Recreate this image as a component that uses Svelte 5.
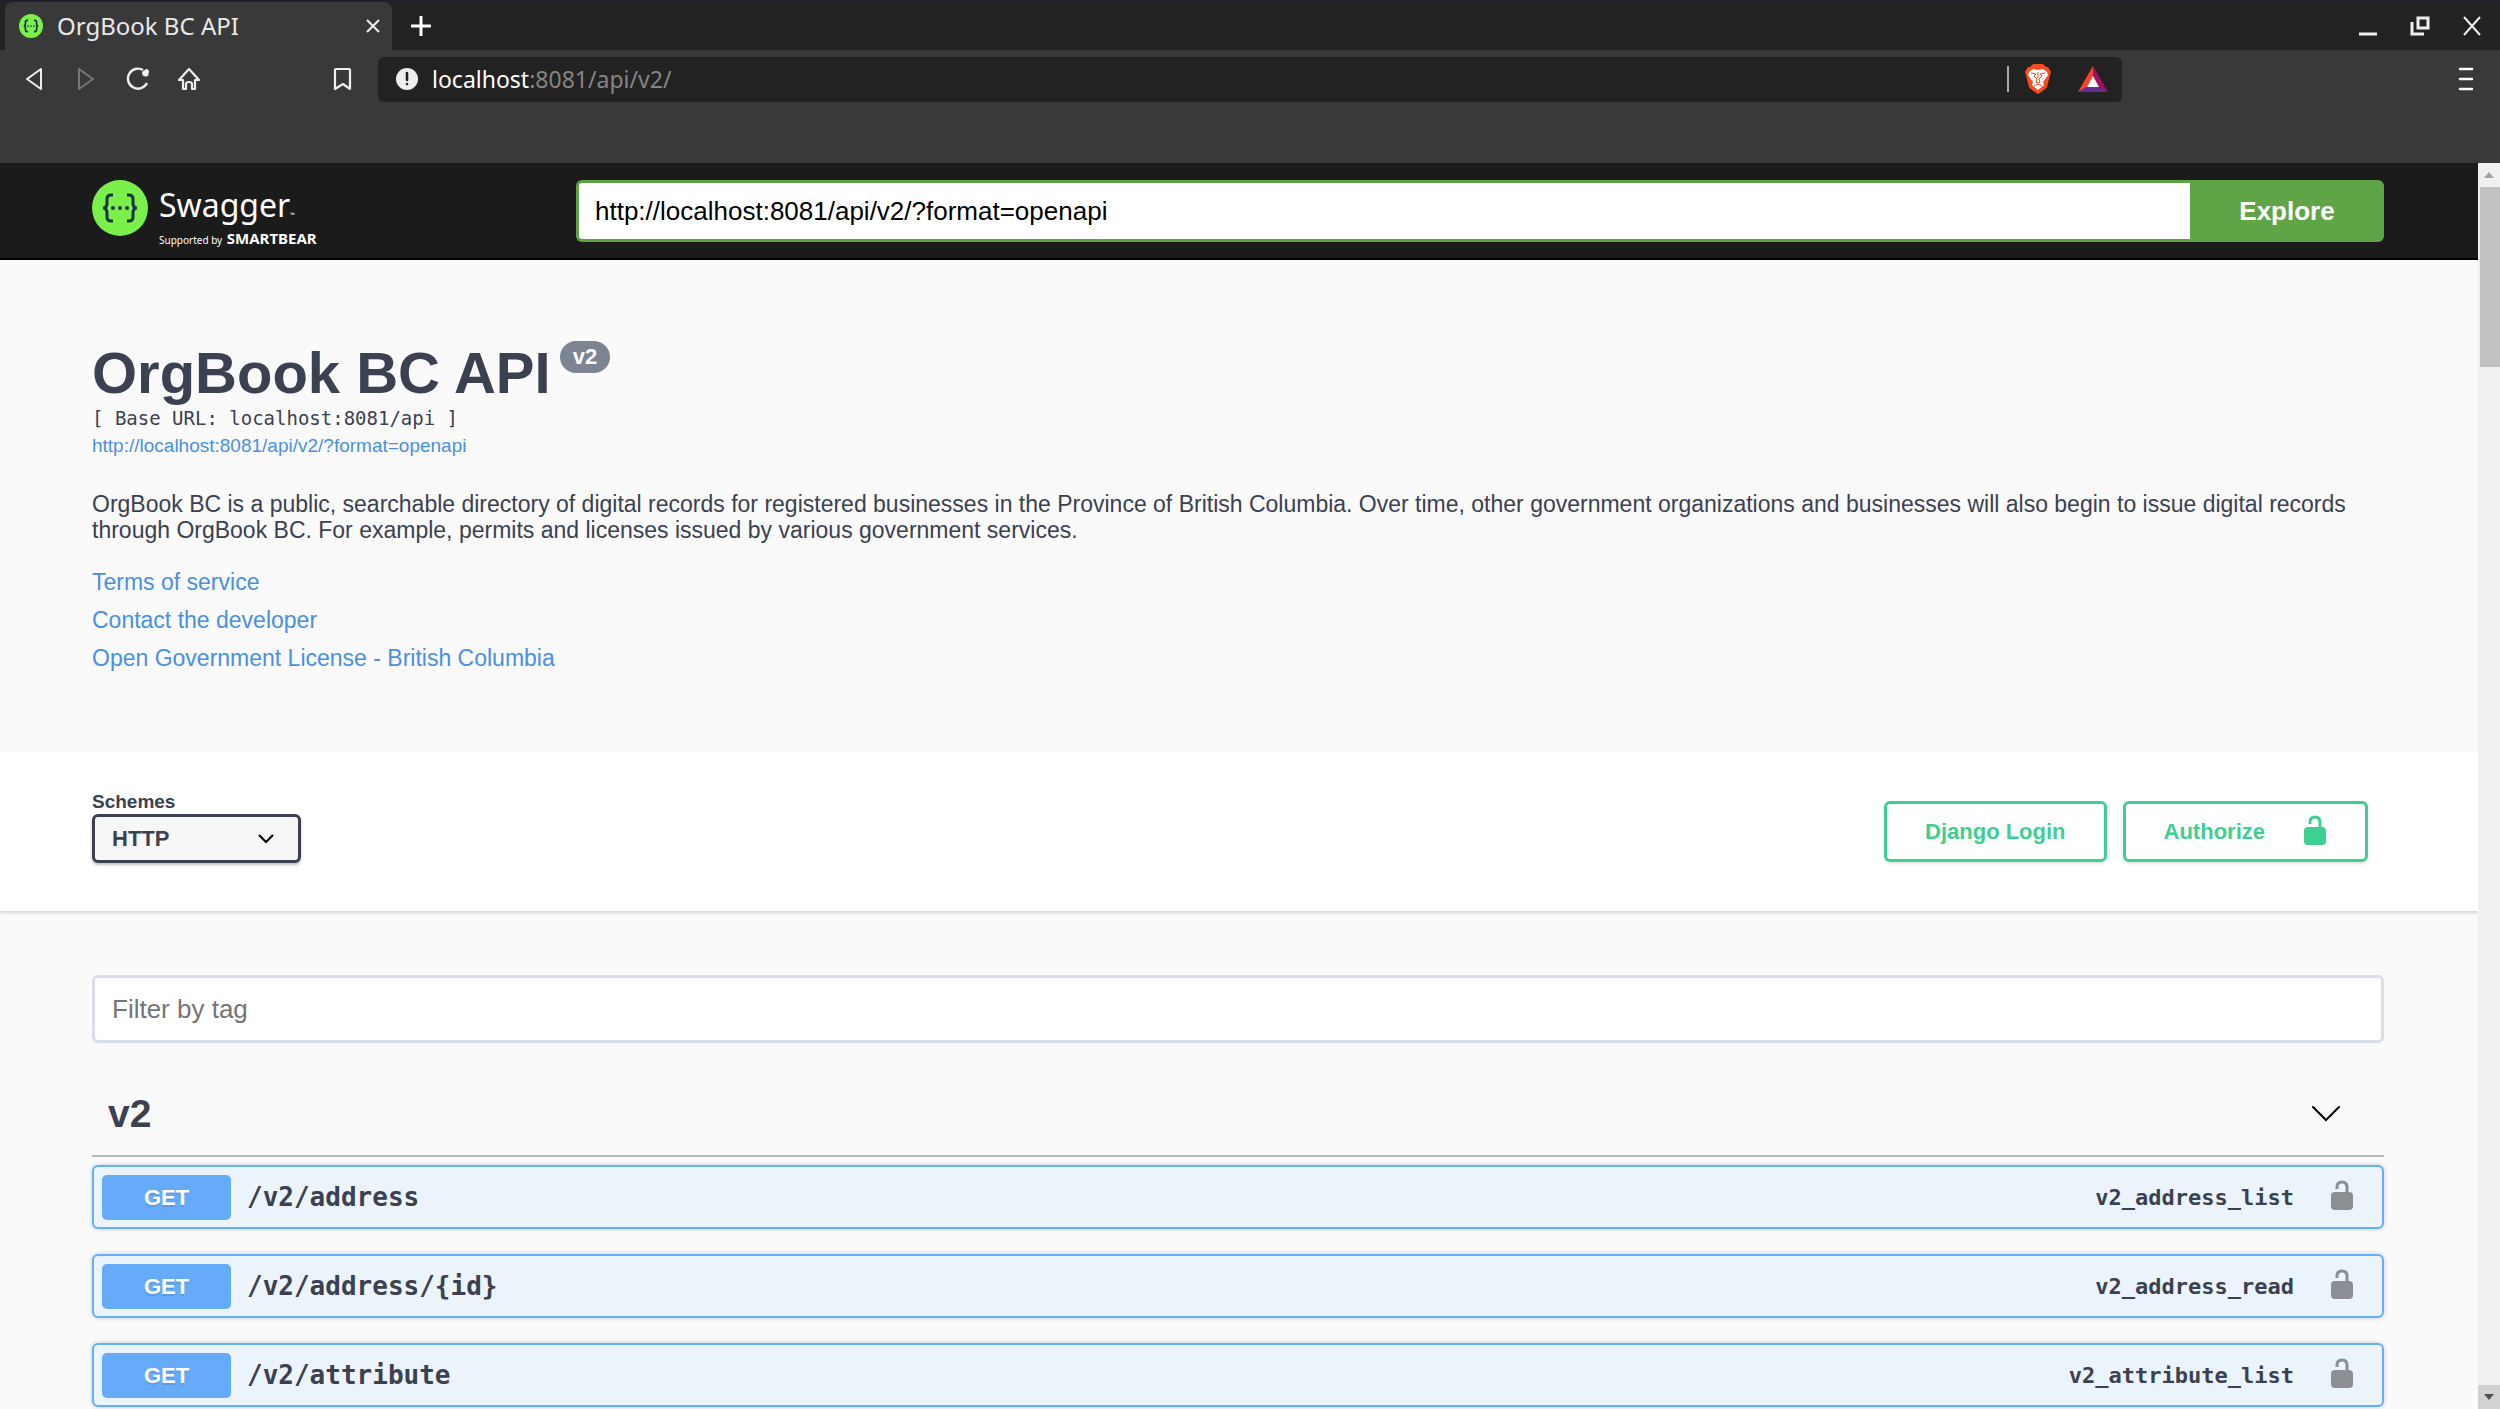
<script lang="ts">
    let url = "http://localhost:8081/api/v2/?format=openapi";
    let scheme = "HTTP";
    let filter = "";

    const links = [
        "Terms of service",
        "Contact the developer",
        "Open Government License - British Columbia",
    ];

    const operations = [
        { method: "GET", path: "/v2/address", id: "v2_address_list" },
        { method: "GET", path: "/v2/address/{id}", id: "v2_address_read" },
        { method: "GET", path: "/v2/attribute", id: "v2_attribute_list" },
    ];
</script>

<div class="browser">
    <header class="chrome">
        <div class="tabs">
            <div class="tab">
                <svg class="favicon" viewBox="0 0 56 56" aria-hidden="true">
                    <circle cx="28" cy="28" r="28" fill="#7cf04a" />
                    <g fill="none" stroke="#173647" stroke-width="4">
                        <path d="M21 15h-2q-4 0-4 4v4q0 5-4 5q4 0 4 5v4q0 4 4 4h2" />
                        <path d="M35 15h2q4 0 4 4v4q0 5 4 5q-4 0-4 5v4q0 4-4 4h-2" />
                    </g>
                    <g fill="#173647">
                        <circle cx="21" cy="28" r="2" />
                        <circle cx="28" cy="28" r="2" />
                        <circle cx="35" cy="28" r="2" />
                    </g>
                </svg>
                <span class="tab-title">OrgBook BC API</span>
                <button class="tab-close" aria-label="Close tab">
                    <svg width="14" height="14" viewBox="0 0 14 14">
                        <path d="M1 1l12 12M13 1L1 13" stroke="#eee" stroke-width="2" />
                    </svg>
                </button>
            </div>
            <button class="new-tab" aria-label="New tab">
                <svg width="20" height="20" viewBox="0 0 20 20">
                    <path d="M10 1v18M1 10h18" stroke="#fff" stroke-width="3" stroke-linecap="round" />
                </svg>
            </button>
            <div class="window-buttons">
                <button aria-label="Minimize">
                    <svg width="20" height="20" viewBox="0 0 20 20">
                        <path d="M1 18h18" stroke="#eee" stroke-width="3" />
                    </svg>
                </button>
                <button aria-label="Restore">
                    <svg width="20" height="20" viewBox="0 0 20 20" fill="none" stroke="#eee" stroke-width="3">
                        <path d="M8 2h10v10H8z" />
                        <path d="M2 6v12h12" />
                    </svg>
                </button>
                <button aria-label="Close">
                    <svg width="20" height="20" viewBox="0 0 20 20">
                        <path d="M2 1l16 18M18 1L2 19" stroke="#eee" stroke-width="2" />
                    </svg>
                </button>
            </div>
        </div>

        <div class="toolbar">
            <div class="nav">
                <button aria-label="Back">
                    <svg width="24" height="24" viewBox="0 0 24 24">
                        <path d="M19 2v20L5 12z" fill="none" stroke="#eee" stroke-width="2" stroke-linejoin="round" />
                    </svg>
                </button>
                <button aria-label="Forward" disabled>
                    <svg width="24" height="24" viewBox="0 0 24 24">
                        <path d="M5 2v20l14-10z" fill="none" stroke="#777" stroke-width="2" stroke-linejoin="round" />
                    </svg>
                </button>
                <button aria-label="Reload">
                    <svg width="24" height="24" viewBox="0 0 24 24">
                        <path d="M21 16A10 10 0 1 1 17 3" fill="none" stroke="#eee" stroke-width="2.4" />
                        <path d="M16 5l4-3q3 0 3 3l-1 4q-6 2-6-4z" fill="#eee" />
                    </svg>
                </button>
                <button aria-label="Home">
                    <svg width="24" height="24" viewBox="0 0 24 24">
                        <path d="M1 13L11 2l10 11h-4v9h-3v-5q0-2-3-2t-3 2v5H5v-9z" fill="none" stroke="#eee" stroke-width="2.2" stroke-linejoin="round" />
                    </svg>
                </button>
            </div>
            <button aria-label="Bookmark">
                <svg width="24" height="24" viewBox="0 0 24 24">
                    <path d="M4 3q0-1 1-1h13q1 0 1 1v19l-7-5l-8 5z" fill="none" stroke="#eee" stroke-width="2.2" stroke-linejoin="round" />
                </svg>
            </button>
            <div class="address">
                <svg width="22" height="22" viewBox="0 0 22 22" aria-hidden="true">
                    <circle cx="11" cy="11" r="11" fill="#eee" />
                    <path d="M11 5v7M11 16v0" stroke="#222" stroke-width="2.6" stroke-linecap="round" />
                </svg>
                <span class="location"><b>localhost</b>:8081/api/v2/</span>
                <span class="divider"></span>
                <button aria-label="Brave Shields">
                    <svg width="26" height="30" viewBox="0 0 26 30">
                        <path d="M8 0h10l3 3h2l3 5-1 3-3 12q-1 2-9 7q-8-5-9-7L1 11 0 8l3-5h2z" fill="#fb4a1e" />
                        <path d="M4 8l4-3 5 1 5-1 4 3 1 3-5 7 1 3-6 5-6-5 1-3-5-7z" fill="#fff" />
                        <path d="M6 9l5 1-2 2 3 3-1 3 2 1 2-1-1-3 3-3-2-2 5-1M13 8v6M9 22l4-2 4 2" fill="none" stroke="#fb4a1e" stroke-width="1" />
                    </svg>
                </button>
                <button class="rewards" aria-label="Brave Rewards">
                    <svg width="30" height="26" viewBox="0 0 30 26">
                        <path d="M15 0L0 26l9-5 6-11z" fill="#ff4130" />
                        <path d="M15 0l15 26-9-5-6-11z" fill="#9e1060" />
                        <path d="M0 26h30l-9-5H9z" fill="#662d91" />
                        <path d="M15 10l6 11H9z" fill="#fff" />
                    </svg>
                </button>
            </div>
            <button class="menu" aria-label="Menu">
                <svg width="16" height="24" viewBox="0 0 16 24">
                    <path d="M2 2h12M2 12h12M2 22h12" stroke="#fff" stroke-width="2.6" stroke-linecap="round" />
                </svg>
            </button>
        </div>
    </header>

    <div class="viewport">
        <main>
            <div class="topbar">
                <a class="logo" href="#top">
                    <svg width="56" height="56" viewBox="0 0 56 56" aria-hidden="true">
                        <circle cx="28" cy="28" r="28" fill="#7cf04a" />
                        <g fill="none" stroke="#173647" stroke-width="3">
                            <path d="M21 15h-2q-4 0-4 4v4q0 5-4 5q4 0 4 5v4q0 4 4 4h2" />
                            <path d="M35 15h2q4 0 4 4v4q0 5 4 5q-4 0-4 5v4q0 4-4 4h-2" />
                        </g>
                        <g fill="#173647">
                            <circle cx="21" cy="28" r="2" />
                            <circle cx="28" cy="28" r="2" />
                            <circle cx="35" cy="28" r="2" />
                        </g>
                    </svg>
                    <span class="wordmark">
                        <span class="name">Swagger<small>™</small></span>
                        <span class="support">Supported by <b>SMARTBEAR</b></span>
                    </span>
                </a>
                <form class="explore" on:submit|preventDefault>
                    <input type="text" aria-label="Definition URL" bind:value={url} />
                    <button>Explore</button>
                </form>
            </div>

            <section class="info">
                <h1>OrgBook BC API<span class="version">v2</span></h1>
                <pre>[ Base URL: localhost:8081/api ]</pre>
                <a class="spec" href={url}>{url}</a>
                <p>
                    OrgBook BC is a public, searchable directory of digital records for registered businesses in the
                    Province of British Columbia. Over time, other government organizations and businesses will also
                    begin to issue digital records through OrgBook BC. For example, permits and licenses issued by
                    various government services.
                </p>
                {#each links as link}
                    <a class="link" href="#top">{link}</a>
                {/each}
            </section>

            <section class="schemes">
                <div class="scheme">
                    <label for="scheme">Schemes</label>
                    <div class="select">
                        <select id="scheme" bind:value={scheme}>
                            <option>HTTP</option>
                        </select>
                        <svg width="16" height="10" viewBox="0 0 16 10" aria-hidden="true">
                            <path d="M1 1l7 7 7-7" fill="none" stroke="#000" stroke-width="2" />
                        </svg>
                    </div>
                </div>
                <div class="auth">
                    <button>Django Login</button>
                    <button>
                        Authorize
                        <svg class="lock" width="24" height="30" viewBox="0 0 24 30" aria-hidden="true">
                            <path d="M7 9V7q0-5 5-5t5 5v6" fill="none" stroke="#3ecf92" stroke-width="3" />
                            <rect x="1" y="12" width="22" height="18" rx="4" fill="#3ecf92" />
                        </svg>
                    </button>
                </div>
            </section>

            <section class="operations">
                <input class="filter" type="text" placeholder="Filter by tag" aria-label="Filter by tag" bind:value={filter} />
                <h2>
                    v2
                    <button aria-label="Collapse v2">
                        <svg width="30" height="16" viewBox="0 0 30 16">
                            <path d="M2 1l13 13L28 1" fill="none" stroke="#000" stroke-width="2" stroke-linecap="round" />
                        </svg>
                    </button>
                </h2>
                {#each operations as op}
                    <div class="op">
                        <span class="method">{op.method}</span>
                        <span class="path">{op.path}</span>
                        <span class="op-id">{op.id}</span>
                        <button aria-label="Authorize {op.id}">
                            <svg class="lock" width="24" height="30" viewBox="0 0 24 30">
                                <path d="M7 9V7q0-5 5-5t5 5v6" fill="none" stroke="#8b8f93" stroke-width="3" />
                                <rect x="1" y="12" width="22" height="18" rx="4" fill="#8b8f93" />
                            </svg>
                        </button>
                    </div>
                {/each}
            </section>
        </main>

        <div class="scrollbar" aria-hidden="true">
            <span class="arrow up"></span>
            <span class="thumb"></span>
            <span class="arrow down"></span>
        </div>
    </div>
</div>

<style>
    :global(body) {
        background: #fafafa;
    }
    * {
        box-sizing: border-box;
    }
    .browser {
        display: flex;
        flex-direction: column;
        min-height: 100vh;
        font-family: "Liberation Sans", Arial, sans-serif;
        color: #3b4151;
    }
    button {
        display: flex;
        align-items: center;
        padding: 0;
        border: none;
        background: none;
        font-family: inherit;
    }
    svg {
        display: block;
        flex: none;
    }

    /* browser chrome */
    .chrome {
        height: 163px;
        background: #393939;
        font-family: "Noto Sans", sans-serif;
    }
    .tabs {
        display: flex;
        align-items: center;
        height: 50px;
        padding: 1px 18px 0 5px;
        border-top: 1px solid #1b202b;
        background: #222;
    }
    .tab {
        display: flex;
        align-items: center;
        width: 387px;
        height: 48px;
        padding: 0 12px 0 14px;
        border-radius: 8px 8px 0 0;
        background: #393939;
    }
    .favicon {
        width: 24px;
        height: 24px;
    }
    .tab-title {
        flex: 1;
        margin-left: 14px;
        padding-bottom: 2px;
        font-size: 24px;
        color: #e8e8e8;
    }
    .new-tab {
        margin-left: 19px;
    }
    .window-buttons {
        display: flex;
        gap: 32px;
        margin-left: auto;
    }
    .toolbar {
        display: flex;
        align-items: center;
        height: 58px;
        padding-left: 22px;
    }
    .nav {
        display: flex;
        gap: 28px;
        margin-right: 129px;
    }
    .address {
        display: flex;
        align-items: center;
        flex: 0 1 1744px;
        height: 45px;
        margin-left: 23px;
        padding: 0 14px 0 18px;
        border-radius: 6px;
        background: #222;
        font-size: 23px;
        color: #858585;
    }
    .location {
        margin-left: 14px;
    }
    .location b {
        font-weight: 400;
        color: #fff;
    }
    .divider {
        width: 2px;
        height: 26px;
        margin: 0 16px 0 auto;
        background: #aaa;
    }
    .rewards {
        margin-left: 27px;
    }
    .menu {
        margin: 0 26px 0 auto;
    }

    /* page */
    .viewport {
        display: flex;
        flex: 1;
    }
    main {
        flex: 1;
        min-width: 0;
        background: #fafafa;
    }
    .topbar {
        display: flex;
        align-items: center;
        height: 97px;
        padding: 0 94px 0 92px;
        border-bottom: 2px solid #000;
        background: #1b1b1b;
    }
    .logo {
        display: flex;
        gap: 11px;
        width: 484px;
        color: #fff;
        font-family: "Noto Sans", sans-serif;
        text-decoration: none;
    }
    .logo svg {
        margin-top: 6px;
    }
    .wordmark {
        display: flex;
        flex-direction: column;
        padding-top: 16px;
    }
    .name {
        font-size: 32px;
        line-height: 30px;
    }
    .name small {
        font-size: 6px;
    }
    .support {
        font-size: 10px;
        line-height: 16px;
    }
    .support b {
        margin-left: 2px;
        font-size: 15px;
    }
    .explore {
        display: flex;
        flex: 1;
        height: 62px;
    }
    .explore input {
        flex: 1;
        min-width: 0;
        padding: 2px 16px 0;
        border: 3px solid #5da345;
        border-right: none;
        border-radius: 6px 0 0 6px;
        background: #fff;
        font-family: inherit;
        font-size: 26px;
        color: #000;
    }
    .explore button {
        justify-content: center;
        width: 194px;
        padding: 2px 0 0;
        border-radius: 0 6px 6px 0;
        background: #5fa548;
        font-size: 26px;
        font-weight: 700;
        color: #fff;
    }
    .info {
        display: flex;
        flex-direction: column;
        align-items: flex-start;
        padding: 81px 60px 75px 92px;
    }
    h1 {
        display: flex;
        align-items: flex-start;
        margin: 0;
        font-size: 58px;
        line-height: 64px;
    }
    .version {
        margin-left: 9px;
        padding: 0 13px;
        border-radius: 16px;
        background: #7d8492;
        font-size: 22px;
        line-height: 32px;
        color: #fff;
    }
    pre {
        margin: 0;
        font-family: "DejaVu Sans Mono", monospace;
        font-size: 19px;
        line-height: 26px;
    }
    .spec {
        font-size: 19px;
        line-height: 30px;
    }
    a {
        color: #4990e2;
        text-decoration: none;
    }
    p {
        margin: 30px 0 20px;
        font-size: 23px;
        line-height: 26px;
    }
    .link {
        font-size: 23px;
        line-height: 38px;
    }
    .schemes {
        display: flex;
        justify-content: space-between;
        align-items: center;
        height: 159px;
        padding: 0 110px 0 92px;
        background: #fff;
        box-shadow: 0 2px 3px rgba(0, 0, 0, 0.15);
    }
    .scheme {
        padding-bottom: 10px;
    }
    .scheme label {
        display: block;
        font-size: 19px;
        font-weight: 700;
        line-height: 24px;
    }
    .select {
        position: relative;
        width: 209px;
    }
    select {
        width: 100%;
        height: 49px;
        padding: 0 17px;
        border: 3px solid #3b4151;
        border-radius: 6px;
        appearance: none;
        background: #f7f7f7;
        box-shadow: 0 2px 3px rgba(0, 0, 0, 0.25);
        font-family: inherit;
        font-size: 22px;
        font-weight: 700;
        color: #3b4151;
    }
    .select svg {
        position: absolute;
        top: 20px;
        right: 27px;
        pointer-events: none;
    }
    .auth {
        display: flex;
        gap: 16px;
    }
    .auth button {
        gap: 38px;
        height: 61px;
        padding: 0 38px;
        border: 3px solid #3ecf92;
        border-radius: 6px;
        box-shadow: 0 2px 3px rgba(0, 0, 0, 0.1);
        font-size: 22px;
        font-weight: 700;
        color: #3ecf92;
    }
    .lock {
        margin-bottom: 4px;
    }
    .operations {
        padding: 64px 94px 0 92px;
    }
    .filter {
        display: block;
        width: 100%;
        height: 68px;
        padding: 0 17px;
        border: 3px solid #d9dde7;
        border-radius: 6px;
        background: #fff;
        font-family: inherit;
        font-size: 26px;
    }
    .filter::placeholder {
        color: #757575;
    }
    h2 {
        display: flex;
        align-items: center;
        justify-content: space-between;
        height: 97px;
        margin: 17px 0 8px;
        padding: 13px 43px 0 16px;
        border-bottom: 2px solid #b9bbc1;
        font-size: 39px;
    }
    .op {
        display: flex;
        align-items: center;
        height: 64px;
        margin-bottom: 25px;
        padding: 0 28px 0 8px;
        border: 2px solid #61affe;
        border-radius: 6px;
        background: #ebf3fb;
        box-shadow: 0 0 5px rgba(0, 0, 0, 0.19);
    }
    .op:last-child {
        margin-bottom: 0;
    }
    .method {
        width: 129px;
        border-radius: 5px;
        background: #65abfa;
        font-size: 22px;
        font-weight: 700;
        line-height: 45px;
        text-align: center;
        text-shadow: 0 2px 0 rgba(0, 0, 0, 0.1);
        color: #fff;
    }
    .path,
    .op-id {
        font-family: "DejaVu Sans Mono", monospace;
        font-weight: 700;
    }
    .path {
        margin-left: 16px;
        font-size: 26px;
    }
    .op-id {
        margin: 0 36px 0 auto;
        font-size: 22px;
    }

    /* scrollbar */
    .scrollbar {
        display: flex;
        flex-direction: column;
        width: 22px;
        background: #f0f0f0;
    }
    .arrow {
        display: flex;
        align-items: center;
        justify-content: center;
        height: 24px;
    }
    .arrow::before {
        content: "";
        border: 5px solid transparent;
    }
    .up::before {
        border-top: none;
        border-bottom: 6px solid #a3a3a3;
    }
    .down {
        margin-top: auto;
        background: #d2d2d2;
    }
    .down::before {
        border-bottom: none;
        border-top: 6px solid #505050;
    }
    .thumb {
        height: 180px;
        margin-left: 2px;
        background: #c1c1c1;
    }
</style>
